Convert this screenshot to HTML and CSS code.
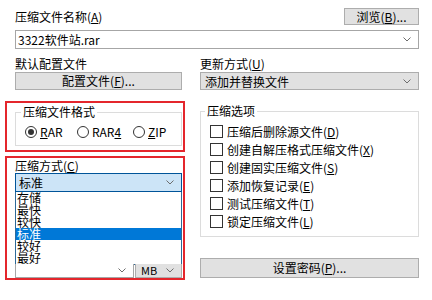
FILE: index.html
```html
<!DOCTYPE html>
<html lang="zh-CN">
<head>
  <meta charset="UTF-8">
  <title>压缩文件名和参数</title>
  <link rel="stylesheet" href="styles.css">
</head>
<body>
  <div class="dialog">
    <div class="name-head">
      <span class="lbl">压缩文件名称(<u>A</u>)</span>
      <button class="btn btn-browse">浏览(<u>B</u>)...</button>
    </div>
    <div class="combo combo-name">
      <span>3322软件站.rar</span>
      <svg class="chev" width="8" height="5" viewBox="0 0 8 5"><path d="M0.5 0.5 L4 4 L7.5 0.5" fill="none" stroke="#6d6d6d" stroke-width="1"/></svg>
    </div>

    <div class="cols">
      <div class="col">
        <span class="lbl lbl-top">默认配置文件</span>
        <button class="btn btn-profile">配置文件(<u>F</u>)...</button>

        <div class="mark mark-format">
          <fieldset class="group group-format">
            <legend>压缩文件格式</legend>
            <div class="radios">
              <span class="radio checked"><span class="circle"></span><u>R</u>AR</span>
              <span class="radio"><span class="circle"></span>RAR<u>4</u></span>
              <span class="radio"><span class="circle"></span><u>Z</u>IP</span>
            </div>
          </fieldset>
        </div>

        <div class="mark mark-method">
          <span class="lbl">压缩方式(<u>C</u>)</span>
          <div class="combo combo-open">
            <span>标准</span>
            <svg class="chev" width="8" height="5" viewBox="0 0 8 5"><path d="M0.5 0.5 L4 4 L7.5 0.5" fill="none" stroke="#6d6d6d" stroke-width="1"/></svg>
          </div>
          <ul class="droplist">
            <li>存储</li>
            <li>最快</li>
            <li>较快</li>
            <li class="selected">标准</li>
            <li>较好</li>
            <li>最好</li>
          </ul>
          <div class="size-row">
            <div class="combo combo-size">
              <svg class="chev" width="8" height="5" viewBox="0 0 8 5"><path d="M0.5 0.5 L4 4 L7.5 0.5" fill="none" stroke="#6d6d6d" stroke-width="1"/></svg>
            </div>
            <div class="combo combo-unit">
              <span>MB</span>
              <svg class="chev" width="8" height="5" viewBox="0 0 8 5"><path d="M0.5 0.5 L4 4 L7.5 0.5" fill="none" stroke="#6d6d6d" stroke-width="1"/></svg>
            </div>
          </div>
        </div>
      </div>

      <div class="col">
        <span class="lbl lbl-top">更新方式(<u>U</u>)</span>
        <div class="combo combo-gray">
          <span>添加并替换文件</span>
          <svg class="chev" width="8" height="5" viewBox="0 0 8 5"><path d="M0.5 0.5 L4 4 L7.5 0.5" fill="none" stroke="#6d6d6d" stroke-width="1"/></svg>
        </div>

        <fieldset class="group group-options">
          <legend>压缩选项</legend>
          <div class="check"><span class="box"></span>压缩后删除源文件(<u>D</u>)</div>
          <div class="check"><span class="box"></span>创建自解压格式压缩文件(<u>X</u>)</div>
          <div class="check"><span class="box"></span>创建固实压缩文件(<u>S</u>)</div>
          <div class="check"><span class="box"></span>添加恢复记录(<u>E</u>)</div>
          <div class="check"><span class="box"></span>测试压缩文件(<u>T</u>)</div>
          <div class="check"><span class="box"></span>锁定压缩文件(<u>L</u>)</div>
        </fieldset>

        <button class="btn btn-password">设置密码(<u>P</u>)...</button>
      </div>
    </div>
  </div>
</body>
</html>
```

FILE: styles.css
```css
* {
  box-sizing: border-box;
}

body {
  margin: 0;
  background: #fff;
  color: #000;
  font-family: "Noto Sans CJK SC", "Noto Sans", sans-serif;
  font-size: 12px;
  line-height: 15px;
}

u {
  text-decoration: underline;
  text-underline-offset: 1px;
}

.dialog {
  padding: 8px 13px 0 15px;
}

.name-head {
  display: flex;
  justify-content: space-between;
  align-items: center;
  height: 17px;
}

.lbl {
  display: block;
  line-height: 15px;
}

.btn {
  display: block;
  margin: 0;
  padding: 0;
  background: #e1e1e1;
  border: 1px solid #adadad;
  font-family: inherit;
  font-size: 12px;
  color: #000;
  text-align: center;
}

.btn-browse {
  width: 75px;
  height: 17px;
  line-height: 15px;
}

/* comboboxes */
.combo {
  display: flex;
  align-items: center;
  justify-content: space-between;
  height: 19px;
  padding: 0 7px 0 2px;
  background: #fff;
  border: 1px solid #a6a6a6;
}

.combo-name {
  margin-top: 5px;
}

.combo-gray {
  height: 18px;
  margin-top: 1px;
  padding-left: 4px;
  background: #e1e1e1;
  border-color: #adadad;
}

.combo-open {
  background: #cce4f7;
  border-color: #005499;
  padding-left: 3px;
}

.chev {
  flex: none;
}

.cols {
  display: grid;
  grid-template-columns: 167px 219px;
  column-gap: 18px;
  margin-top: 7px;
}

.col {
  display: flex;
  flex-direction: column;
}

.btn-profile {
  height: 18px;
  margin-top: 1px;
  line-height: 16px;
}

/* red highlight frames */
.mark {
  margin: 0 -3px 0 -10px;
  padding: 0 1px 0 8px;
  border: 2px solid #e4262c;
}

.mark-format {
  margin-top: 11px;
  padding-top: 2px;
  padding-bottom: 4px;
}

.mark-method {
  margin-top: 4px;
}

/* group boxes */
.group {
  margin: 0;
  border: 1px solid #dcdcdc;
  min-width: 0;
}

.group legend {
  padding: 0 2px;
  line-height: 14px;
}

.group-format {
  padding: 5px 0 7px 0;
}

.group-format legend {
  margin-left: 5px;
}

.radios {
  display: grid;
  grid-template-columns: 52px 56px auto;
  height: 14px;
  padding-left: 9px;
  align-items: center;
}

.radio {
  display: flex;
  align-items: center;
}

.circle {
  width: 12px;
  height: 12px;
  margin-right: 3px;
  border: 1px solid #333;
  border-radius: 50%;
  display: flex;
  align-items: center;
  justify-content: center;
}

.radio.checked .circle::after {
  content: "";
  width: 6px;
  height: 6px;
  border-radius: 50%;
  background: #333;
}

.group-options {
  margin-top: 14px;
  padding: 4px 0 6px 0;
}

.group-options legend {
  margin-left: 4px;
}

.check {
  display: flex;
  align-items: center;
  height: 18px;
  padding-left: 9px;
}

.box {
  width: 13px;
  height: 13px;
  margin-right: 4px;
  border: 1px solid #333;
  background: #fff;
}

.btn-password {
  height: 20px;
  margin-top: 21px;
  line-height: 18px;
}

/* open dropdown */
.droplist {
  list-style: none;
  margin: 0;
  padding: 0;
  background: #fff;
  border: 1px solid #2d6a99;
  border-top: none;
}

.droplist li {
  height: 12px;
  line-height: 12px;
  padding-left: 1px;
}

.droplist li.selected {
  background: #0078d7;
  color: #fff;
}

.size-row {
  display: flex;
  height: 14px;
  margin-top: -1px;
}

.combo-size {
  width: 119px;
  height: 14px;
  margin-right: 1px;
  border-top: none;
  justify-content: flex-end;
}

.combo-unit {
  flex: 1;
  height: 14px;
  border-top: none;
  background: #e1e1e1;
  border-color: #adadad;
  padding-left: 5px;
  font-size: 11px;
}
```
